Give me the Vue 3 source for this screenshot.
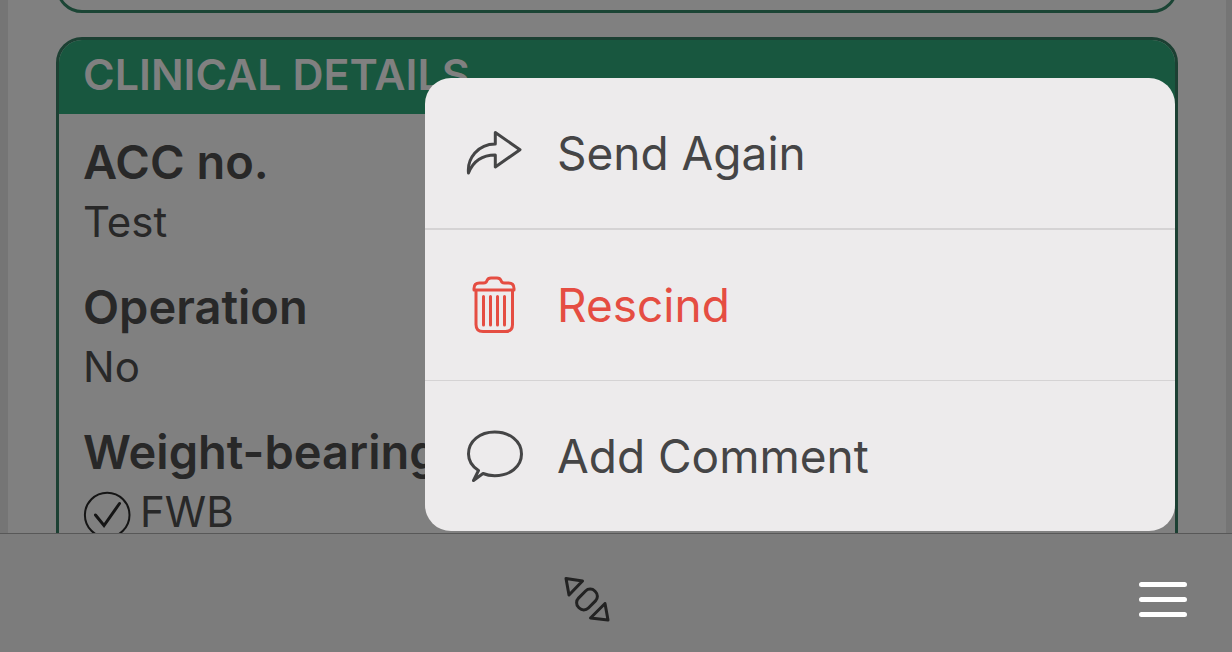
<script setup>
const details = [
  { label: 'ACC no.', value: 'Test' },
  { label: 'Operation', value: 'No' },
  { label: 'Weight-bearing', value: 'FWB', checked: true },
]
</script>

<template>
  <div class="screen">
    <main class="sheet">
      <section class="card previous"></section>
      <section class="card clinical">
        <h2>CLINICAL DETAILS</h2>
        <dl>
          <div v-for="item in details" :key="item.label" class="detail">
            <dt>{{ item.label }}</dt>
            <dd>
              <svg v-if="item.checked" class="check" viewBox="0 0 48 48" aria-hidden="true">
                <circle cx="24.200" cy="27" r="22.300" stroke-width="2" />
                <path d="M12.500 27 L21 37.500 L36.500 15.500" stroke-width="3" />
              </svg>
              <span>{{ item.value }}</span>
            </dd>
          </div>
        </dl>
      </section>
    </main>

    <footer class="toolbar">
      <span></span>
      <button type="button" class="tool" aria-label="Resize">
        <svg class="resize" viewBox="0 0 48 48" aria-hidden="true">
          <path d="M3 3.500 L19.500 6 L6 20 Z" />
          <path d="M45 45 L42 28.500 L27.500 43 Z" />
          <rect x="17" y="13" width="14" height="23" rx="6.500" transform="rotate(45 24 24.500)" />
        </svg>
      </button>
      <button type="button" class="tool menu-button" aria-label="Menu" aria-expanded="true">
        <svg class="bars" viewBox="0 0 48 36" aria-hidden="true">
          <path d="M2.500 3.500 H45.500 M2.500 18.500 H45.500 M2.500 33.500 H45.500" />
        </svg>
      </button>
    </footer>

    <div class="menu" role="menu">
      <button type="button" role="menuitem">
        <svg viewBox="0 0 60 60" aria-hidden="true">
          <path d="M30.300 9.500 L55 26.700 L30.300 44 V32 C17 32 8 38.500 3.500 50 C2 35.500 13 21 30.300 21 Z" />
        </svg>
        <span>Send Again</span>
      </button>
      <button type="button" role="menuitem" class="danger">
        <svg viewBox="0 0 60 60" aria-hidden="true">
          <path d="M9 15 V13.500 Q9 8 14.500 8 H18.500 Q21.500 8 22 5.500 Q23 3 26 3 H32 Q35 3 36 5.500 Q36.500 8 39.500 8 H43.500 Q49 8 49 13.500 V15 Z" />
          <path d="M11 15.500 V49.500 Q11 56.500 18 56.500 H40.500 Q47.500 56.500 47.500 49.500 V15.500" />
          <path d="M18.500 21.500 V50 M25.500 21.500 V50 M32.500 21.500 V50 M39.500 21.500 V50" />
        </svg>
        <span>Rescind</span>
      </button>
      <button type="button" role="menuitem">
        <svg viewBox="0 0 60 60" aria-hidden="true">
          <path d="M13.500 44.500 C6.500 40 3.500 34.500 3.500 28 C3.500 15 15 6 29.700 6 C44.500 6 56.500 15 56.500 28 C56.500 41 44.500 49.700 29.700 49.700 C25 49.700 21.500 49 18 47.500 L8.500 54.500 Z" />
        </svg>
        <span>Add Comment</span>
      </button>
    </div>
  </div>
</template>

<style>
body {
  background: #757575;
}
</style>

<style scoped>
.screen {
  position: relative;
  display: flex;
  flex-direction: column;
  height: 100vh;
  overflow: hidden;
  font-family: Inter, "Liberation Sans", sans-serif;
  color: #282828;
}
.sheet {
  display: flex;
  flex-direction: column;
  flex: 1;
  min-height: 0;
  overflow: hidden;
  margin: 0 6px 0 8px;
  padding: 0 48px;
  background: #808080;
}
.card {
  flex: none;
  border: 3px solid #1c4033;
  border-radius: 26px;
  overflow: hidden;
}
.previous {
  height: 74px;
  margin-top: -67px;
  margin-bottom: 24px;
  border-color: #1b4535;
}
h2 {
  margin: 0;
  padding: 0 24px 6px;
  background: #18573f;
  color: #808080;
  font-size: 43px;
  line-height: 68px;
  font-weight: 600;
  white-space: nowrap;
}
dl {
  margin: 0;
  padding: 18px 24px;
}
.detail {
  margin-bottom: 25px;
}
dt {
  font-size: 47px;
  line-height: 60px;
  font-weight: 600;
  white-space: nowrap;
}
dd {
  display: flex;
  align-items: center;
  gap: 9px;
  margin: 0;
  font-size: 42px;
  line-height: 60px;
}
.check {
  width: 48px;
  height: 48px;
  overflow: visible;
  fill: none;
  stroke: #151515;
  stroke-linecap: round;
}
.toolbar {
  display: grid;
  grid-template-columns: 1fr auto 1fr;
  align-items: center;
  height: 118px;
  padding: 0 45px 0 0;
  border-top: 1px solid #585858;
  background: #7c7c7c;
}
button {
  margin: 0;
  padding: 0;
  border: 0;
  background: none;
  color: inherit;
  font: inherit;
}
.tool {
  display: flex;
  align-items: center;
  height: 118px;
  padding-top: 12px;
  padding-right: 13px;
}
.menu-button {
  justify-self: end;
  padding-right: 0;
}
.resize {
  width: 48px;
  height: 48px;
  fill: none;
  stroke: #222;
  stroke-width: 3;
  stroke-linejoin: round;
}
.bars {
  width: 48px;
  height: 36px;
  stroke: #fff;
  stroke-width: 5;
  stroke-linecap: round;
}
.menu {
  position: absolute;
  right: 57px;
  bottom: 121px;
  width: 750px;
  border-radius: 26px;
  background: #edebec;
  overflow: hidden;
}
.menu button {
  display: flex;
  align-items: center;
  gap: 32px;
  width: 100%;
  height: 151px;
  padding: 0 40px;
  color: #454546;
  font-size: 46px;
  line-height: 60px;
  text-align: left;
}
.menu button:first-child {
  height: 150px;
}
.menu button + button {
  border-top: 1px solid #d5d3d4;
}
.menu button.danger {
  height: 152px;
  border-top-width: 2px;
  color: #e54d42;
}
.menu svg {
  flex: none;
  width: 60px;
  height: 60px;
  fill: none;
  stroke: currentColor;
  stroke-width: 3;
  stroke-linejoin: round;
  stroke-linecap: round;
}
</style>
